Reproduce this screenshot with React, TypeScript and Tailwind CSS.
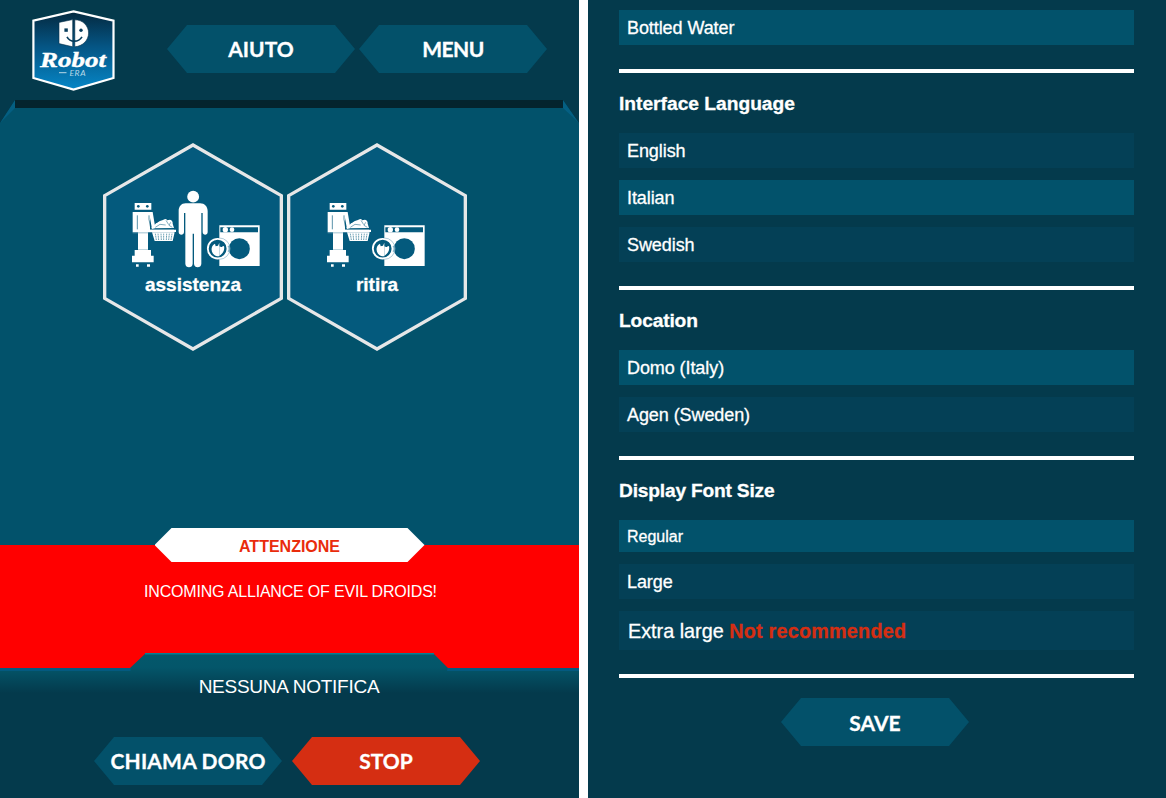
import type { ReactNode } from 'react';

const buttonFont = "font-['Lato','Open_Sans',sans-serif]";

function HexButton({ children, tone = 'bg-[#03516a]', className = 'pb-0.5' }: { children: ReactNode; tone?: string; className?: string }) {
  return (
    <button
      className={`flex h-12 w-[188px] items-center justify-center whitespace-nowrap text-[21px] font-bold leading-none text-white [-webkit-text-stroke:0.3px_currentColor] [clip-path:polygon(20px_0,168px_0,100%_50%,168px_100%,20px_100%,0_50%)] ${buttonFont} ${tone} ${className}`}
    >
      {children}
    </button>
  );
}

function Logo() {
  return (
    <svg className="h-[82px] w-[84px]" viewBox="0 0 84 82" role="img" aria-label="Robot Era">
      <defs>
        <linearGradient id="shield" x1="0" y1="0" x2="0" y2="1">
          <stop offset="0" stopColor="#04293f" />
          <stop offset="0.45" stopColor="#055584" />
          <stop offset="1" stopColor="#0686c6" />
        </linearGradient>
      </defs>
      <path d="M41.500 1.400 81.500 10.600V68L41.500 79.500 1.400 68V10.600Z" fill="url(#shield)" stroke="#fff" strokeWidth="2.200" />
      <path d="M40.700 9.600v27.200L27 33.600V12.400Z" fill="#fff" stroke="#063049" strokeWidth="0.600" />
      <path d="M42.800 9.800C51 9.800 56.600 16 56.600 23S51 36.200 42.800 36.800Z" fill="#fff" stroke="#063049" strokeWidth="0.600" />
      <rect x="32.400" y="18.400" width="3.400" height="3.400" fill="#063c5c" />
      <circle cx="49" cy="20.200" r="1.700" fill="#063c5c" />
      <path d="M35 26.800c3 5.800 11.500 5.800 15 0" fill="none" stroke="#063c5c" strokeWidth="1.600" />
      <text x="8" y="56.600" textLength="66" lengthAdjust="spacingAndGlyphs" fill="#fff" stroke="#fff" strokeWidth="0.400" fontFamily="'Liberation Serif', serif" fontStyle="italic" fontWeight="700" fontSize="22">Robot</text>
      <path d="M27 62.700h7.500" stroke="#b9d9e8" strokeWidth="1" />
      <text x="37.500" y="65.800" textLength="16" fill="#b9d9e8" fontFamily="Lato, sans-serif" fontStyle="italic" fontSize="8.500">ERA</text>
    </svg>
  );
}

function Robot() {
  return (
    <g fill="#fff">
      <path d="M104 189h50v20h-50Z" />
      <circle cx="115" cy="199" r="4" fill="#045a7d" />
      <circle cx="142" cy="199" r="4" fill="#045a7d" />
      <path d="M98 216h60l8 48-10 3-6-33v35h72v8h-78v52H114v-52H98Z" />
      <path d="M112 226v42" stroke="#045a7d" strokeWidth="2" />
      <path d="M147 226v12l5 26" fill="none" stroke="#045a7d" strokeWidth="2" />
      <path d="M98 278.500h47" stroke="#6fa3b9" strokeWidth="2" />
      <path d="M104 330h49v17h8v20H96v-20h8ZM108 373h8v7h-8ZM141 373h9v7h-9Z" />
      <path d="M154 265c3-9 10-9 14-15 6-2 8-7 14-8 8-1 9-5 16-5l4 4 8-2c6 1 9 7 8 12l4 13Z" />
      <path d="m166 262 14-9 17 2M198 241l8 13M212 247l-5 9 10 6" fill="none" stroke="#045a7d" strokeWidth="1.500" />
      <path d="M150 269h78v7h-78ZM156 277h68l-6 26h-54Z" />
      <path d="M166 281l3 19M174 281l2 19M183 281l1 19M191 281v19M200 281l-1 19M208 281l-2 19M216 281l-3 19" stroke="#2f7896" strokeWidth="2.200" fill="none" />
      <path d="M162 286h57M164 294h53" stroke="#fff" strokeWidth="2" />
    </g>
  );
}

function Person() {
  return (
    <g fill="#fff">
      <circle cx="279.500" cy="170" r="17.800" />
      <path d="M257 190h43c14 0 23 10 23 23v63c0 11-15 11-15 0v-57h-4v152c0 14-22 14-22 0v-90h-4v90c0 14-22 14-22 0V219h-4v57c0 11-16 11-16 0v-63c0-13 8-23 21-23Z" />
    </g>
  );
}

function Washer() {
  return (
    <g>
      <path d="M358 256h121v122H358Z" fill="#fff" />
      <path d="M361 262h113v15H361Z" fill="#045a7d" />
      <circle cx="376" cy="269" r="8" fill="#fff" />
      <circle cx="396" cy="269" r="7" fill="#fff" />
      <circle cx="418" cy="326" r="31.500" fill="#045a7d" />
      <circle cx="353" cy="326" r="29.500" fill="#045a7d" stroke="#fff" strokeWidth="5.500" />
      <path d="M358 294a32 32 0 0 1 0 64" fill="none" stroke="#8ab4c7" strokeWidth="2" />
      <path d="M358 308v41c-16 1-25-12-23-24 1-7 5-12 10-14l2 8 7-2Z" fill="#fff" />
      <path d="M358 319c8 5 7 0 14-1 3 13-4 24-14 29Z" fill="#fff" />
      <path d="M384 318c5 4 5 12 0 17" fill="none" stroke="#8ab4c7" strokeWidth="4" />
    </g>
  );
}

function ServiceTile({ label, children }: { label: string; children: ReactNode }) {
  return (
    <button className="relative flex h-[208px] w-[180px] items-end justify-center pb-[54px]">
      <svg className="absolute inset-0 h-full w-full" viewBox="9 9 540 624">
        <path d="M279 15 544 167V475L279 627 14 475V167Z" fill="#045a7d" stroke="#e6e7e8" strokeWidth="10" />
        {children}
      </svg>
      <span className="relative text-[19px] font-bold leading-6 text-white [-webkit-text-stroke:0.3px_currentColor]">{label}</span>
    </button>
  );
}

function Option({ children, selected = false, size = 'h-[35px] text-[18px] tracking-[-0.080px]' }: { children: ReactNode; selected?: boolean; size?: string }) {
  return (
    <div className={`flex shrink-0 items-center px-2 pt-0.5 text-white [-webkit-text-stroke:0.3px_currentColor] ${size} ${selected ? 'bg-[#02526b]' : 'bg-[#044056]'}`}>
      <span>{children}</span>
    </div>
  );
}

function Group({ title, tracking = '', children }: { title: string; tracking?: string; children: ReactNode }) {
  return (
    <section className="mt-6 border-t-4 border-white pt-[19px]">
      <h2 className={`mb-[17px] text-[19.200px] font-bold leading-6 text-white [-webkit-text-stroke:0.3px_currentColor] ${tracking}`}>{title}</h2>
      <div className="flex flex-col gap-3">{children}</div>
    </section>
  );
}

function HomePanel() {
  return (
    <div className="flex h-full w-[579px] shrink-0 flex-col overflow-hidden bg-[#043a4c]">
      <header className="flex h-[100px] shrink-0 items-start pl-8 pt-[10px]">
        <Logo />
        <nav className="ml-[51px] mt-[15px] flex gap-1">
          <HexButton>AIUTO</HexButton>
          <HexButton className="pb-0.5 tracking-[-0.500px]">MENU</HexButton>
        </nav>
      </header>

      <main className="relative flex h-[445px] shrink-0 flex-col bg-[#02526b] [clip-path:polygon(15px_0,563px_0,100%_23px,100%_100%,0_100%,0_23px)]">
        <svg className="absolute left-0 top-0 h-6 w-full" viewBox="0 0 579 24">
          <path d="M15 0v8L0 23ZM563 0v8l16 15Z" fill="#045f82" />
        </svg>
        <div className="ml-[15px] mr-4 h-2 shrink-0 bg-[#04242e]" />
        <div className="mt-[35px] flex gap-1 pl-[103px]">
          <ServiceTile label="assistenza">
            <Robot />
            <Person />
            <Washer />
          </ServiceTile>
          <ServiceTile label="ritira">
            <g transform="translate(33 0)"><Robot /></g>
            <g transform="translate(-57 0)"><Washer /></g>
          </ServiceTile>
        </div>
      </main>

      <section className="relative flex h-[123px] shrink-0 flex-col items-center bg-[#ff0000]">
        <h2 className="-mt-[17px] flex h-[34px] w-[270px] shrink-0 items-center justify-center bg-white pt-1 text-[16px] font-bold text-[#e92c0c] [clip-path:polygon(17px_0,253px_0,100%_50%,253px_100%,17px_100%,0_50%)]">
          ATTENZIONE
        </h2>
        <p className="mt-[18px] pl-0.5 text-[16px] leading-6 tracking-[-0.190px] text-white">INCOMING ALLIANCE OF EVIL DROIDS!</p>
      </section>

      <footer className="relative flex grow flex-col items-center">
        <svg className="absolute -top-[15px] left-0 h-[60px] w-full" viewBox="0 0 579 60">
          <defs>
            <linearGradient id="tab" x1="0" y1="0" x2="0" y2="40" gradientUnits="userSpaceOnUse">
              <stop offset="0" stopColor="#04586b" />
              <stop offset="0.350" stopColor="#04566a" />
              <stop offset="1" stopColor="#043a4c" />
            </linearGradient>
          </defs>
          <path d="M0 15H130L146 0H433L448 15H579V60H0Z" fill="url(#tab)" />
          <path d="M145 .75H434" stroke="#078096" strokeWidth="1.500" />
          <path d="M0 15H130.500V18H0ZM447.500 15H579V18H447Z" fill="#045a80" />
        </svg>
        <p className="relative mt-[7px] pr-px text-[19px] leading-6 tracking-[-0.250px] text-white">NESSUNA NOTIFICA</p>
        <div className="relative mt-[38px] flex w-full gap-2.5 pl-[94px]">
          <HexButton className="pb-0.5 tracking-[0.200px]">CHIAMA DORO</HexButton>
          <HexButton tone="bg-[#d52e12]">STOP</HexButton>
        </div>
      </footer>
    </div>
  );
}

function SettingsPanel() {
  return (
    <div className="flex h-full grow flex-col bg-[#043a4c] pl-[31px] pr-8 pt-[10px]">
      <Option selected>Bottled Water</Option>
      <Group title="Interface Language">
        <Option>English</Option>
        <Option selected>Italian</Option>
        <Option>Swedish</Option>
      </Group>
      <Group title="Location" tracking="tracking-[-0.150px]">
        <Option selected>Domo (Italy)</Option>
        <Option>Agen (Sweden)</Option>
      </Group>
      <Group title="Display Font Size" tracking="tracking-[-0.200px]">
        <Option selected size="h-8 text-[16px]">Regular</Option>
        <Option>Large</Option>
        <Option size="h-[39px] pl-[9px] text-[19.800px]">
          Extra large <strong className="tracking-[0.230px] text-[#d52e12]">Not recommended</strong>
        </Option>
      </Group>
      <div className="mt-6 flex justify-center border-t-4 border-white pr-[3px] pt-5">
        <HexButton className="pt-px">SAVE</HexButton>
      </div>
    </div>
  );
}

export default function App() {
  return (
    <div className="flex h-[798px] w-[1166px] gap-[9px] overflow-hidden bg-white font-['Liberation_Sans',Arial,sans-serif]">
      <HomePanel />
      <SettingsPanel />
    </div>
  );
}
